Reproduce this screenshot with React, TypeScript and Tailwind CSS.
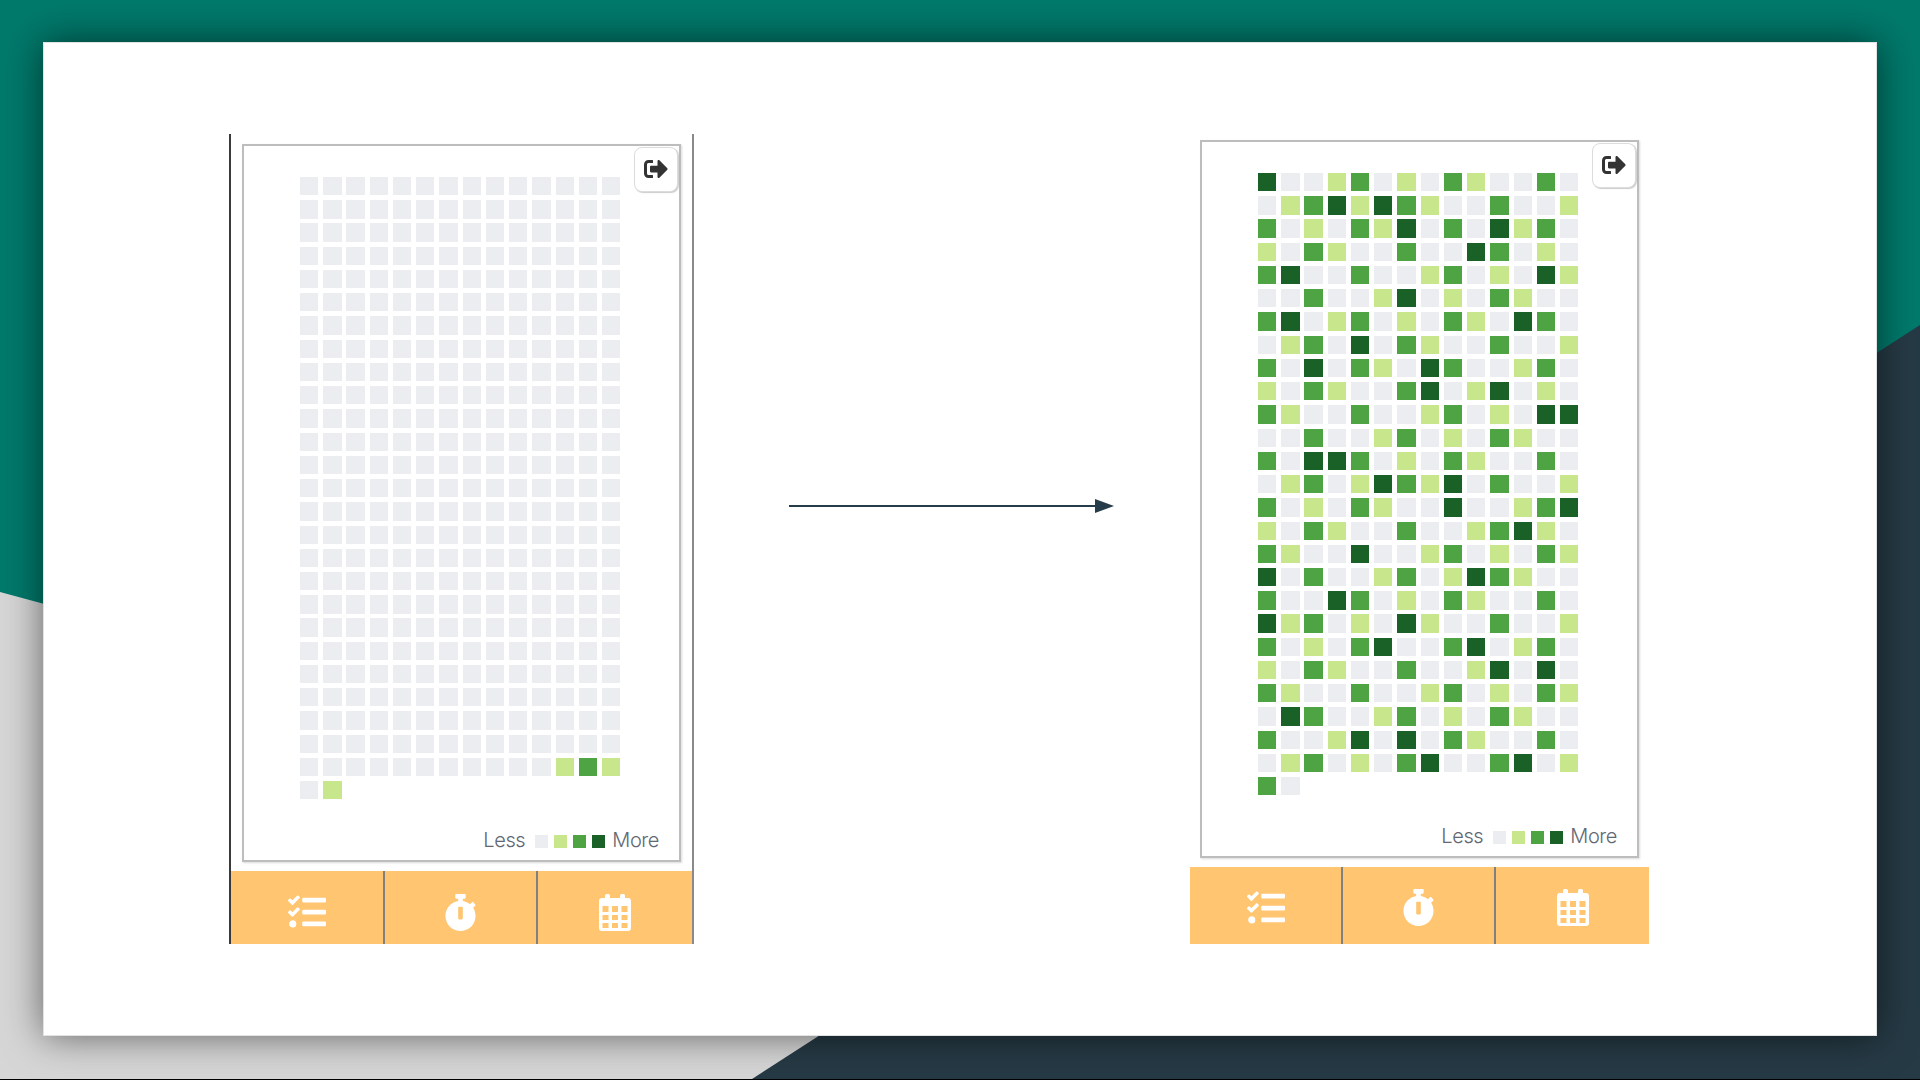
import { FaSignOutAlt, FaTasks, FaStopwatch } from 'react-icons/fa';

const LEVELS = ['bg-[#ebedf0]', 'bg-[#c8e68c]', 'bg-[#4ea343]', 'bg-[#196127]'];

const FILLED_ROWS = [
  '30012010210020',
  '01231321002001',
  '20102130203120',
  '10210020032010',
  '23002001201031',
  '00200130102100',
  '23012010210320',
  '01203021002001',
  '20302103200120',
  '10210023013010',
  '21002001201033',
  '00200120102100',
  '20332010210020',
  '01201321302001',
  '20102100300123',
  '10210020012310',
  '21003001201021',
  '30200120132100',
  '20032010210020',
  '31201031002001',
  '20102300230120',
  '10210020013030',
  '21002001201021',
  '03200120102100',
  '20013030210020',
  '01201023002301',
  '20',
];

const EMPTY_ROWS = [
  ...Array.from({ length: 25 }, () => '00000000000000'),
  '00000000000121',
  '01',
];

function CalendarIcon() {
  return (
    <svg width="32" height="37" viewBox="0 0 32 37" fill="currentColor">
      <rect x="6" y="0" width="5" height="8" rx="1.5" />
      <rect x="21" y="0" width="5" height="8" rx="1.5" />
      <path
        fillRule="evenodd"
        d="M3 4h26a3 3 0 0 1 3 3v27a3 3 0 0 1-3 3H3a3 3 0 0 1-3-3V7a3 3 0 0 1 3-3zM3.500 12v6h6v-6zM13 12v6h6v-6zM22.500 12v6h6v-6zM3.500 21v5h6v-5zM13 21v5h6v-5zM22.500 21v5h6v-5zM3.500 29v5h6v-5zM13 29v5h6v-5zM22.500 29v5h6v-5z"
      />
    </svg>
  );
}

function Legend() {
  return (
    <div className="mt-auto flex items-center self-end text-[20px] font-light leading-none tracking-[-0.4px] text-[#5f6873]">
      <span className="mr-[10px]">Less</span>
      <span className="mr-[6px] mt-[3px] h-[13px] w-[13px] bg-[#ebedf0]" />
      <span className="mr-[6px] mt-[3px] h-[13px] w-[13px] bg-[#c8e68c]" />
      <span className="mr-[6px] mt-[3px] h-[13px] w-[13px] bg-[#4ea343]" />
      <span className="mr-[7px] mt-[3px] h-[13px] w-[13px] bg-[#196127]" />
      <span>More</span>
    </div>
  );
}

function Heatmap({ rows }: { rows: string[] }) {
  return (
    <div className="grid grid-cols-[repeat(14,18.3px)] gap-[4.95px]">
      {rows.flatMap((row, r) =>
        row.split('').map((level, c) => (
          <div key={`${r}-${c}`} className={`h-[18.3px] ${LEVELS[Number(level)]}`} />
        ))
      )}
    </div>
  );
}

function TabBar({
  className,
  cellClass,
  firstWidth,
}: {
  className: string;
  cellClass: string;
  firstWidth: string;
}) {
  return (
    <div className={`mt-[9px] flex bg-[#ffc570] text-white ${className}`}>
      <div className={`flex items-center justify-center ${firstWidth} ${cellClass}`}>
        <FaTasks className="text-[38px]" />
      </div>
      <div className={`flex w-[153px] items-center justify-center border-l-2 border-[#808080] ${cellClass}`}>
        <FaStopwatch className="text-[37px]" />
      </div>
      <div className={`flex flex-1 items-center justify-center border-l-2 border-[#808080] ${cellClass}`}>
        <CalendarIcon />
      </div>
    </div>
  );
}

function PhoneCard({ rows, className }: { rows: string[]; className: string }) {
  return (
    <div
      className={`relative flex h-[718px] w-[439px] flex-col border-2 border-[#bdbdbd] pb-[10px] pl-[56px] pr-[20px] pt-[31px] shadow-[1px_1px_2px_rgba(0,0,0,0.15)] ${className}`}
    >
      <Heatmap rows={rows} />
      <Legend />
      <button className="absolute right-[1px] top-[1px] flex h-[45px] w-[44px] items-center justify-center rounded-lg border border-[#dcdcdc] bg-white pb-[1px] text-[#333] shadow-[1px_1px_1px_rgba(0,0,0,0.2)]">
        <FaSignOutAlt className="text-[24px]" />
      </button>
    </div>
  );
}

export default function App() {
  return (
    <div className="relative h-[1080px] w-[1920px] overflow-hidden bg-[#d6d6d6] pl-[43px] pt-[42px] font-['Inter',sans-serif]">
      {/* backdrop shapes */}
      <svg className="absolute inset-0" width="1920" height="1080" viewBox="0 0 1920 1080">
        <polygon points="0,0 1920,0 1920,1079 1800,1079 0,592" fill="#00796b" />
        <polygon points="752,1079 1920,325 1920,1079" fill="#263a45" />
        <rect x="0" y="1079" width="1920" height="1" fill="#000" />
      </svg>

      <div className="relative flex h-[994px] w-[1834px] items-end border border-[#e2e2e2] bg-white pb-[91px] pl-[185px] shadow-[0_0_36px_rgba(0,0,0,0.55)]">
        <div className="w-[465px] border-l-2 border-r-2 border-l-[#3a3a3a] border-r-[#8a8a8a] pt-[10px]">
          <PhoneCard rows={EMPTY_ROWS} className="ml-[11px]" />
          <TabBar className="h-[73px]" cellClass="pt-[9px]" firstWidth="w-[152px]" />
        </div>

        <svg className="mb-[430px] ml-[95px] shrink-0" width="326" height="16" viewBox="0 0 326 16">
          <rect x="0" y="7" width="308" height="2" fill="#263c48" />
          <polygon points="306,1 325,8 306,15" fill="#263c48" />
        </svg>

        <div className="ml-[75px] w-[459px]">
          <PhoneCard rows={FILLED_ROWS} className="ml-[10px]" />
          <TabBar className="h-[77px]" cellClass="pt-[4px]" firstWidth="w-[151px]" />
        </div>
      </div>
    </div>
  );
}
